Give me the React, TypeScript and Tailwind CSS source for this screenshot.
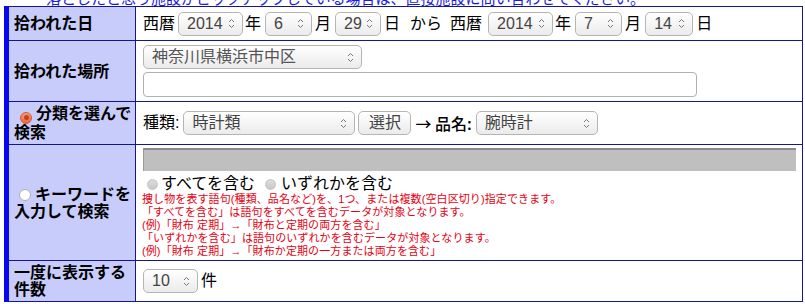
import type { ReactNode } from 'react'

function Arrows() {
  return (
    <svg width="7" height="11" viewBox="0 0 7 11" className="shrink-0">
      <path d="M1 4 L3.5 1.5 L6 4" fill="none" stroke="#777" strokeWidth="1" />
      <path d="M1 7 L3.5 9.5 L6 7" fill="none" stroke="#777" strokeWidth="1" />
    </svg>
  )
}

function Sel({ className, children }: { className: string; children: ReactNode }) {
  return (
    <div
      className={`flex h-[24px] shrink-0 items-center justify-between rounded-[5px] border border-[#b5b5b5] bg-gradient-to-b from-white to-[#ebebeb] pl-[8px] pr-[7px] text-[16px] text-[#444] ${className}`}
    >
      <span className="leading-none">{children}</span>
      <Arrows />
    </div>
  )
}

function Radio({ checked, small }: { checked?: boolean; small?: boolean }) {
  if (small) {
    return (
      <span className="inline-block h-[11px] w-[11px] shrink-0 rounded-full border border-[#c4c4c4] bg-gradient-to-b from-[#dcdcdc] to-[#c8c8c8] align-middle"></span>
    )
  }
  if (checked) {
    return (
      <span className="mr-[4px] ml-[6px] inline-flex h-[12px] w-[12px] items-center justify-center rounded-full border border-[#d9582e] bg-gradient-to-b from-[#f59a75] to-[#e8693c] align-[-1px]">
        <span className="h-[5px] w-[5px] rounded-full bg-[#c9401a]"></span>
      </span>
    )
  }
  return (
    <span className="mr-[4px] ml-[5px] inline-block h-[12px] w-[12px] rounded-full border border-[#b0b0b0] bg-white align-[-1px]"></span>
  )
}

const rows = [
  { h: 'h-[34px]', label: <>拾われた日</> },
  { h: 'h-[61px]', label: <>拾われた場所</> },
  { h: 'h-[43px]', label: <><Radio checked />分類を選んで検索</> },
  { h: 'h-[116px]', label: <><Radio />キーワードを入力して検索</> },
  { h: 'h-[40px]', label: <>一度に表示する件数</> },
]

const notes = [
  '捜し物を表す語句(種類、品名など)を、1つ、または複数(空白区切り)指定できます。',
  '「すべてを含む」は語句をすべてを含むデータが対象となります。',
  '(例)「財布 定期」→「財布と定期の両方を含む」',
  '「いずれかを含む」は語句のいずれかを含むデータが対象となります。',
  '(例)「財布 定期」→「財布か定期の一方または両方を含む」',
]

export default function App() {
  const content: ReactNode[] = [
    <div className="flex items-center text-[16px] text-black">
      <span>西暦</span>
      <Sel className="ml-[3px] w-[65px]">2014</Sel>
      <span className="ml-[2px]">年</span>
      <Sel className="ml-[4px] w-[47px]">6</Sel>
      <span className="ml-[3px]">月</span>
      <Sel className="ml-[4px] w-[46px]">29</Sel>
      <span className="ml-[3px]">日</span>
      <span className="ml-[10px]">から</span>
      <span className="ml-[8px]">西暦</span>
      <Sel className="ml-[6px] w-[65px]">2014</Sel>
      <span className="ml-[2px]">年</span>
      <Sel className="ml-[4px] w-[47px]">7</Sel>
      <span className="ml-[3px]">月</span>
      <Sel className="ml-[4px] w-[48px]">14</Sel>
      <span className="ml-[3px]">日</span>
    </div>,
    <div className="flex flex-col gap-[3px]">
      <Sel className="w-[219px] text-[#555]">神奈川県横浜市中区</Sel>
      <div className="h-[25px] w-[554px] rounded-[4px] border border-[#b0b0b0] bg-white"></div>
    </div>,
    <div className="flex items-center text-[16px] text-black">
      <span>種類:</span>
      <Sel className="ml-[4px] w-[172px]">時計類</Sel>
      <div className="ml-[3px] flex h-[24px] w-[53px] items-center justify-center rounded-[5px] border border-[#b5b5b5] bg-gradient-to-b from-white to-[#ebebeb] text-[#444]">
        選択
      </div>
      <span className="ml-[4px] font-['Noto_Sans_CJK_JP',sans-serif] font-medium">→ 品名:</span>
      <Sel className="ml-[4px] w-[122px]">腕時計</Sel>
    </div>,
    <div className="flex w-full flex-col pt-[3px]">
      <div className="h-[23px] w-[653px] border-l border-t-2 border-l-[#9a9a9a] border-t-[#8a8a8a] bg-[#bfbfbf]"></div>
      <div className="mt-[3px] flex h-[19px] items-center text-[16px] text-black">
        <span className="ml-[4px]"><Radio small /></span>
        <span className="ml-[3px] leading-none">すべてを含む</span>
        <span className="ml-[10px]"><Radio small /></span>
        <span className="ml-[5px] leading-none">いずれかを含む</span>
      </div>
      <div className="text-[11px] leading-[13px] tracking-[0.1px] text-[#e60012]">
        {notes.map((n, i) => (
          <div key={i} className="-ml-[1px]">{n}</div>
        ))}
      </div>
    </div>,
    <div className="flex items-center text-[16px] text-black">
      <Sel className="w-[55px]">10</Sel>
      <span className="ml-[3px]">件</span>
    </div>,
  ]

  return (
    <div className="h-[304px] w-[805px] overflow-hidden bg-white font-['Liberation_Sans','Noto_Sans_CJK_JP',sans-serif]">
      <div className="h-[6px] overflow-hidden">
        <div className="-mt-[9px] pl-[46px] text-[15px] leading-none whitespace-nowrap text-[#1a1ae6]">
          落としたと思う施設がピックアップしている場合は、直接施設に問い合わせてください。
        </div>
      </div>
      <div className="ml-[4px] grid w-[799px] grid-cols-[127px_1fr] border-t border-r border-b border-l-[5px] border-t-[#15159a] border-r-[#15159a] border-b-[#15159a] border-l-[#0808f0]">
        {rows.map((r, i) => (
          <div key={i} className="contents">
            <div
              className={`flex items-center border-r border-[#15159a] bg-[#c8ccfb] pl-[5px] pr-[2px] text-[16px] leading-[17px] font-bold text-black ${r.h} ${i < rows.length - 1 ? 'border-b' : ''}`}
            >
              <div>{r.label}</div>
            </div>
            <div
              className={`flex items-center border-[#15159a] pl-[7px] ${r.h} ${i < rows.length - 1 ? 'border-b' : ''} ${i === 3 ? 'items-start' : ''}`}
            >
              {content[i]}
            </div>
          </div>
        ))}
      </div>
    </div>
  )
}
